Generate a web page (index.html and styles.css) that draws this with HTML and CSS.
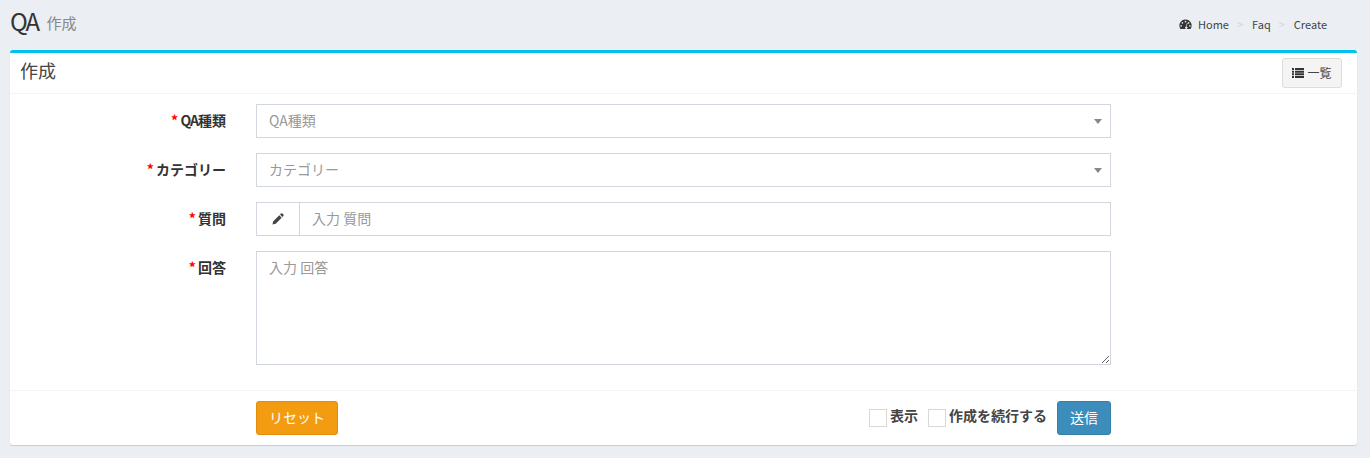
FILE: index.html
```html
<!DOCTYPE html>
<html lang="ja">
<head>
<meta charset="utf-8">
<title>QA 作成</title>
<link rel="stylesheet" href="styles.css">
</head>
<body>
<header class="page-head">
  <h1 class="page-title"><span class="title-qa">QA </span><small class="page-sub">作成</small></h1>
  <ol class="crumbs">
    <li class="crumb"><svg class="gauge" viewBox="0 0 14 12" width="13" height="11"><path fill="#333" fill-rule="evenodd" d="M7 0.5a6.6 6.6 0 0 0-5.7 10 1 1 0 0 0 .9.5h9.6a1 1 0 0 0 .9-.5A6.6 6.6 0 0 0 7 .5ZM7 2a.9.9 0 1 1 0 1.8A.9.9 0 0 1 7 2ZM3.6 3.4a.9.9 0 1 1 0 1.8.9.9 0 0 1 0-1.8ZM10.4 3.4a.9.9 0 1 1 0 1.8.9.9 0 0 1 0-1.8ZM2.2 6.6a.9.9 0 1 1 0 1.8.9.9 0 0 1 0-1.8ZM11.8 6.6a.9.9 0 1 1 0 1.8.9.9 0 0 1 0-1.8ZM8.6 4.2l.7.3-1.2 3.6a1.4 1.4 0 1 1-1.6 1.3 1.4 1.4 0 0 1 1.1-1.3Z"/></svg>Home</li>
    <li class="crumb crumb-next">Faq</li>
    <li class="crumb crumb-next">Create</li>
  </ol>
</header>
<main class="box">
  <div class="box-head">
    <h3 class="box-title">作成</h3>
    <a class="list-btn"><svg viewBox="0 0 12 10" width="12" height="10"><path fill="#333" d="M0 0h2v2H0zM3 0h9v2H3zM0 2.7h2v2H0zM3 2.7h9v2H3zM0 5.3h2v2H0zM3 5.3h9v2H3zM0 8h2v2H0zM3 8h9v2H3z"/></svg><span class="list-text">一覧</span></a>
  </div>
  <form class="form">
    <div class="fields">
      <div class="row">
        <label class="label"><span class="req">*</span> <span class="tight">QA</span>種類</label>
        <div class="control select"><span class="ph">QA種類</span><i class="caret"></i></div>
      </div>
      <div class="row">
        <label class="label"><span class="req">*</span> カテゴリー</label>
        <div class="control select"><span class="ph">カテゴリー</span><i class="caret"></i></div>
      </div>
      <div class="row">
        <label class="label"><span class="req">*</span> 質問</label>
        <div class="control group">
          <span class="addon"><svg viewBox="0 0 12 12" width="12" height="12"><path fill="#444" d="M9 .6a1 1 0 0 1 1.4 0l1 1a1 1 0 0 1 0 1.4l-1 1L8 1.6ZM7.3 2.3l2.4 2.4-6 6L.4 11.6l.9-3.3Z"/></svg></span>
          <span class="ph group-ph">入力 質問</span>
        </div>
      </div>
      <div class="row">
        <label class="label"><span class="req">*</span> 回答</label>
        <textarea class="control area" placeholder="入力 回答"></textarea>
      </div>
    </div>
    <div class="foot">
      <button type="button" class="btn btn-reset">リセット</button>
      <div class="foot-right">
        <label class="check"><i class="box-check"></i>表示</label>
        <label class="check check-next"><i class="box-check"></i>作成を続行する</label>
        <button type="button" class="btn btn-send">送信</button>
      </div>
    </div>
  </form>
</main>
</body>
</html>
```
FILE: styles.css
```css
* { box-sizing: border-box; }
html, body { margin: 0; height: 100%; }
body {
  background: #ebeef3;
  font-family: "Noto Sans CJK JP", sans-serif;
  font-size: 14px;
  color: #333;
  overflow: hidden;
  padding: 0 13px 0 10px;
}
.page-head {
  height: 50px;
  display: flex;
  justify-content: space-between;
  align-items: flex-start;
}
.page-title {
  margin: 6px 0 0;
  font-size: 24px;
  line-height: 29px;
  font-weight: 400;
  color: #333;
}
.title-qa { letter-spacing: -2px; }
.page-sub {
  font-size: 15px;
  color: #888;
  padding-left: 5px;
  font-weight: 400;
  vertical-align: 2px;
}
.crumbs {
  list-style: none;
  margin: 17px 0 0;
  padding: 0 30px 0 0;
  display: flex;
  font-size: 11px;
  line-height: 15px;
  color: #444;
}
.crumb { display: flex; align-items: center; }
.crumb-next::before {
  content: ">";
  color: #d4d4d4;
  font-size: 11px;
  padding: 0 9px 0 8px;
}
.gauge { margin-right: 6px; }
.box {
  background: #fff;
  border-top: 3px solid #00c0ef;
  border-radius: 3px;
  box-shadow: 0 1px 1px rgba(0, 0, 0, 0.15);
  height: 395px;
}
.box-head {
  height: 41px;
  border-bottom: 1px solid #f4f4f4;
  display: flex;
  justify-content: space-between;
  align-items: flex-start;
  padding: 5px 15px 0 10px;
}
.box-title {
  margin: 0;
  font-size: 18px;
  font-weight: 400;
  line-height: 24px;
  color: #444;
}
.list-btn {
  width: 60px;
  height: 30px;
  background: #f4f4f4;
  border: 1px solid #ddd;
  border-radius: 3px;
  font-size: 12px;
  color: #444;
  display: flex;
  align-items: center;
  justify-content: center;
  gap: 3px;
}
.list-text { padding-bottom: 2px; }
.fields {
  height: 296px;
  padding-top: 10px;
  display: flex;
  flex-direction: column;
  gap: 15px;
}
.row { display: flex; align-items: flex-start; }
.label {
  width: 216px;
  text-align: right;
  font-weight: 700;
  font-size: 14px;
  line-height: 20px;
  padding-top: 6px;
  margin-right: 30px;
  color: #333;
  flex: none;
}
.req { color: #f00; margin-right: -1px; }
.tight { letter-spacing: -1px; }
.control {
  width: 855px;
  height: 34px;
  border: 1px solid #d2d6de;
  background: #fff;
  font-family: inherit;
  font-size: 14px;
  display: flex;
  align-items: center;
}
.ph { color: #999; padding-bottom: 3px; }
.select { padding: 0 12px; justify-content: space-between; }
.caret {
  width: 0;
  height: 0;
  border-left: 4px solid transparent;
  border-right: 4px solid transparent;
  border-top: 5px solid #888;
  margin-right: -4px;
}
.addon {
  width: 43px;
  height: 100%;
  border-right: 1px solid #d2d6de;
  display: flex;
  align-items: center;
  justify-content: center;
}
.group-ph { padding-left: 12px; }
.area {
  display: block;
  height: 114px;
  padding: 5px 12px;
  resize: vertical;
  line-height: 20px;
  outline: none;
}
.area::placeholder { color: #999; opacity: 1; }
.foot {
  height: 55px;
  border-top: 1px solid #f4f4f4;
  padding: 10px 246px 0;
  display: flex;
  justify-content: space-between;
  align-items: flex-start;
}
.foot-right { display: flex; align-items: flex-start; }
.btn {
  height: 34px;
  border-radius: 3px;
  font-family: inherit;
  font-size: 14px;
  color: #fff;
  padding: 0 0 2px;
  cursor: pointer;
}
.btn-reset { width: 82px; background: #f39c12; border: 1px solid #e08e0b; }
.btn-send { width: 54px; background: #3c8dbc; border: 1px solid #367fa9; margin-left: 10px; }
.check {
  display: flex;
  align-items: flex-start;
  font-weight: 700;
  font-size: 14px;
  line-height: 20px;
  color: #444;
  padding-top: 4px;
}
.check-next { margin-left: 10px; }
.box-check {
  width: 18px;
  height: 18px;
  margin: 4px 3px 0 0;
  background: #fff;
  border: 1px solid #d8d8d8;
  display: block;
}
```
